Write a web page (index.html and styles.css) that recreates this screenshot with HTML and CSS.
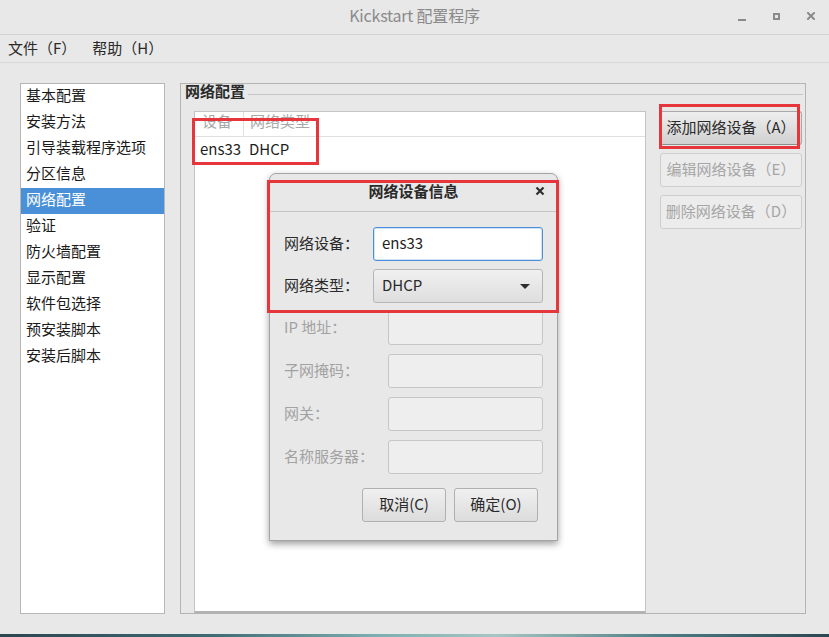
FILE: index.html
```html
<!DOCTYPE html>
<html lang="zh-CN">
<head>
<meta charset="utf-8">
<title>Kickstart 配置程序</title>
<link rel="stylesheet" href="styles.css">
</head>
<body>
<div class="window">
  <header class="titlebar">
    <div></div>
    <div class="title">Kickstart 配置程序</div>
    <div class="wm">
      <span class="wm-min"></span>
      <span class="wm-max"></span>
      <svg class="wm-close" width="8" height="8" viewBox="0 0 8 8"><path d="M1 1L7 7M7 1L1 7" stroke="#8a8a8a" stroke-width="2" stroke-linecap="square"/></svg>
    </div>
  </header>
  <nav class="menubar">
    <span class="menu-item">文件（F）</span>
    <span class="menu-item">帮助（H）</span>
  </nav>
  <main class="main">
    <ul class="sidebar">
      <li>基本配置</li>
      <li>安装方法</li>
      <li>引导装载程序选项</li>
      <li>分区信息</li>
      <li class="selected">网络配置</li>
      <li>验证</li>
      <li>防火墙配置</li>
      <li>显示配置</li>
      <li>软件包选择</li>
      <li>预安装脚本</li>
      <li>安装后脚本</li>
    </ul>
    <section class="frame">
      <div class="frame-head">
        <span class="legend">网络配置</span>
        <span class="frame-line"></span>
      </div>
      <div class="frame-body">
        <div class="table">
          <div class="thead">
            <div class="th c1">设备</div>
            <div class="th c2">网络类型</div>
          </div>
          <div class="tr">
            <div class="td c1">ens33</div>
            <div class="td c2">DHCP</div>
          </div>
        </div>
        <div class="actions">
          <button class="btn btn-hover">添加网络设备（A）</button>
          <button class="btn" disabled>编辑网络设备（E）</button>
          <button class="btn" disabled>删除网络设备（D）</button>
        </div>
      </div>
    </section>
  </main>
  <div class="desktop-strip"></div>
</div>

<div class="dialog">
  <div class="dialog-head">
    <div></div>
    <div class="dialog-title">网络设备信息</div>
    <div class="dialog-close">
      <svg width="10" height="10" viewBox="0 0 10 10"><path d="M1.5 1.5L8.5 8.5M8.5 1.5L1.5 8.5" stroke="#2e2e2e" stroke-width="2.2"/></svg>
    </div>
  </div>
  <div class="dialog-body">
    <div class="group group-a">
      <div class="row">
        <span class="label label-a">网络设备<span class="colon">：</span></span>
        <div class="field field-a focus">ens33</div>
      </div>
      <div class="row">
        <span class="label label-a">网络类型<span class="colon">：</span></span>
        <div class="field field-a combo"><span class="combo-text">DHCP</span><span class="caret"></span></div>
      </div>
    </div>
    <div class="group group-b">
      <div class="row">
        <span class="label label-b dim">IP 地址<span class="colon">：</span></span>
        <div class="field field-b disabled"></div>
      </div>
      <div class="row">
        <span class="label label-b dim">子网掩码<span class="colon">：</span></span>
        <div class="field field-b disabled"></div>
      </div>
      <div class="row">
        <span class="label label-b dim">网关<span class="colon">：</span></span>
        <div class="field field-b disabled"></div>
      </div>
      <div class="row">
        <span class="label label-b dim">名称服务器<span class="colon">：</span></span>
        <div class="field field-b disabled"></div>
      </div>
    </div>
    <div class="dialog-actions">
      <button class="dbtn">取消(C)</button>
      <button class="dbtn">确定(O)</button>
    </div>
  </div>
</div>

<div class="mark mark-table"></div>
<div class="mark mark-add"></div>
<div class="mark mark-dialog"></div>
</body>
</html>
```

FILE: styles.css
```css
* { box-sizing: border-box; }

html, body {
  margin: 0;
  padding: 0;
}

body {
  width: 829px;
  height: 637px;
  overflow: hidden;
  background: #e8e8e8;
  font-family: "Noto Sans CJK SC", "Noto Sans", sans-serif;
  font-size: 15px;
  color: #1e1e1e;
  position: relative;
}

.window {
  display: flex;
  flex-direction: column;
  height: 637px;
}

/* title bar */
.titlebar {
  height: 35px;
  border-bottom: 1px solid #d2d2d2;
  display: grid;
  grid-template-columns: 1fr auto 1fr;
  align-items: start;
}

.title {
  font-size: 16px;
  line-height: 30px;
  color: #8a8a8a;
  letter-spacing: -0.2px;
}

.wm {
  justify-self: end;
  display: flex;
  align-items: flex-end;
  gap: 27px;
  height: 8px;
  margin-top: 12px;
  margin-right: 14px;
}

.wm-min {
  width: 8px;
  height: 2px;
  background: #8a8a8a;
  margin-bottom: -1px;
}

.wm-max {
  width: 7px;
  height: 7px;
  border: 2px solid #8a8a8a;
}

.wm-close { display: block; }

/* menubar */
.menubar {
  height: 28px;
  border-bottom: 1px solid #d8d8d8;
  display: flex;
  align-items: center;
  gap: 16px;
  padding: 0 0 2px 8px;
  color: #2a2a2a;
}

/* main */
.main {
  display: flex;
  gap: 15px;
  padding: 20px 0 0 20px;
  height: 551px;
}

.sidebar {
  list-style: none;
  margin: 0;
  padding: 0;
  width: 145px;
  height: 531px;
  background: #fff;
  border: 1px solid #b6b6b6;
}

.sidebar li {
  height: 26px;
  line-height: 22px;
  padding: 0 0 4px 5px;
  color: #1a1a1a;
}

.sidebar li.selected {
  background: #4a90d9;
  color: #fff;
}

/* frame */
.frame {
  width: 626px;
  height: 531px;
  border: 1px solid #b4b4b4;
  display: flex;
  flex-direction: column;
}

.frame-head {
  height: 20px;
  display: flex;
  align-items: flex-start;
  padding-left: 4px;
}

.legend {
  font-weight: 600;
  color: #2a2a2a;
  line-height: 18px;
  margin-top: -2px;
}

.frame-line {
  flex: 1;
  border-top: 1px solid #c6c6c6;
  margin: 10px 2px 0 3px;
}

.frame-body {
  flex: 1;
  display: flex;
  gap: 14px;
  padding: 7px 2px 0 13px;
}

.table {
  width: 452px;
  background: #fff;
  border: 1px solid #c4c4c4;
  border-bottom: 2px solid #b2b2b2;
}

.thead {
  display: flex;
  height: 25px;
  border-bottom: 1px solid #e0e0e0;
}

.th {
  line-height: 18px;
  color: #a8a8a8;
}

.th.c1 {
  width: 49px;
  padding-left: 7px;
  border-right: 1px solid #e0e0e0;
}

.th.c2 { padding-left: 6px; }

.tr {
  display: flex;
  height: 28px;
  line-height: 23px;
}

.td.c1 { width: 49px; padding-left: 5px; }
.td.c2 { padding-left: 5px; }

.actions {
  display: flex;
  flex-direction: column;
  gap: 8px;
}

.btn {
  width: 142px;
  height: 34px;
  font-family: inherit;
  font-size: 15px;
  color: #2a2a2a;
  background: linear-gradient(#f2f2f2, #e2e2e2);
  border: 1px solid #b8b8b8;
  border-radius: 3px;
  padding: 0 0 4px 0;
}

.btn-hover {
  background: linear-gradient(#eeeeee, #d0d0d0);
  border-color: #a8a8a8;
  border-bottom-color: #8e8e8e;
}

.btn:disabled {
  background: #ececec;
  border-color: #cdcdcd;
  color: #a6a6a6;
}

.desktop-strip {
  margin-top: auto;
  height: 3px;
  background: linear-gradient(90deg, #2c4550, #3e6a72 25%, #7aaeb0 45%, #a6c6c4 60%, #4d7d84 80%, #2b4650);
}

/* dialog */
.dialog {
  position: absolute;
  left: 269px;
  top: 173px;
  width: 289px;
  background: #e8e8e8;
  border: 1px solid #a4a4a4;
  border-radius: 7px 7px 0 0;
  box-shadow: 0 3px 7px rgba(0, 0, 0, 0.38);
}

.dialog-head {
  height: 38px;
  border-bottom: 1px solid #c4c4c4;
  display: grid;
  grid-template-columns: 1fr auto 1fr;
  align-items: center;
}

.dialog-title {
  font-weight: 700;
  color: #2a2a2a;
  line-height: 30px;
  margin-bottom: 4px;
}

.dialog-close {
  justify-self: end;
  margin-right: 12px;
  display: flex;
  margin-top: -4px;
}

.dialog-body {
  padding: 15px 14px 18px 14px;
}

.group {
  display: flex;
  flex-direction: column;
}

.group-a { gap: 8px; }
.group-b { gap: 9px; margin-top: 8px; }

.row {
  display: flex;
  align-items: center;
  height: 34px;
}

.label {
  color: #2a2a2a;
  padding-bottom: 4px;
}
.label-a { width: 89px; }
.label-b { width: 104px; }
.label.dim { color: #a2a2a2; }

.colon {
  font-family: "Noto Sans CJK JP", "Noto Sans CJK SC", sans-serif;
}

.field {
  height: 34px;
  border-radius: 3px;
}

.field-a { width: 170px; }
.field-b { width: 155px; }

.focus {
  background: #fff;
  border: 1px solid #4a90d9;
  box-shadow: inset 0 0 0 1px rgba(74, 144, 217, 0.25);
  padding-left: 8px;
  line-height: 29px;
  color: #1e1e1e;
}

.combo {
  background: linear-gradient(#f0f0f0, #dedede);
  border: 1px solid #b6b6b6;
  display: flex;
  align-items: center;
  justify-content: space-between;
  padding: 0 12px 0 8px;
  color: #2a2a2a;
}

.combo-text {
  padding-bottom: 3px;
}

.caret {
  width: 0;
  height: 0;
  border-left: 5px solid transparent;
  border-right: 5px solid transparent;
  border-top: 5px solid #2e2e2e;
}

.disabled {
  background: #eeeeee;
  border: 1px solid #c6c6c6;
}

.dialog-actions {
  display: flex;
  justify-content: flex-end;
  gap: 8px;
  margin-top: 14px;
  padding-right: 5px;
}

.dbtn {
  width: 84px;
  height: 34px;
  font-family: inherit;
  font-size: 15px;
  color: #2a2a2a;
  background: linear-gradient(#f0f0f0, #dcdcdc);
  border: 1px solid #b0b0b0;
  border-radius: 3px;
  padding: 0 0 3px 0;
}

/* annotation marks */
.mark {
  position: absolute;
  border: 3px solid #e6363b;
}

.mark-table { left: 192px; top: 118px; width: 127px; height: 47px; }
.mark-add { left: 659px; top: 104px; width: 141px; height: 45px; }
.mark-dialog { left: 267px; top: 180px; width: 292px; height: 133px; }
```
